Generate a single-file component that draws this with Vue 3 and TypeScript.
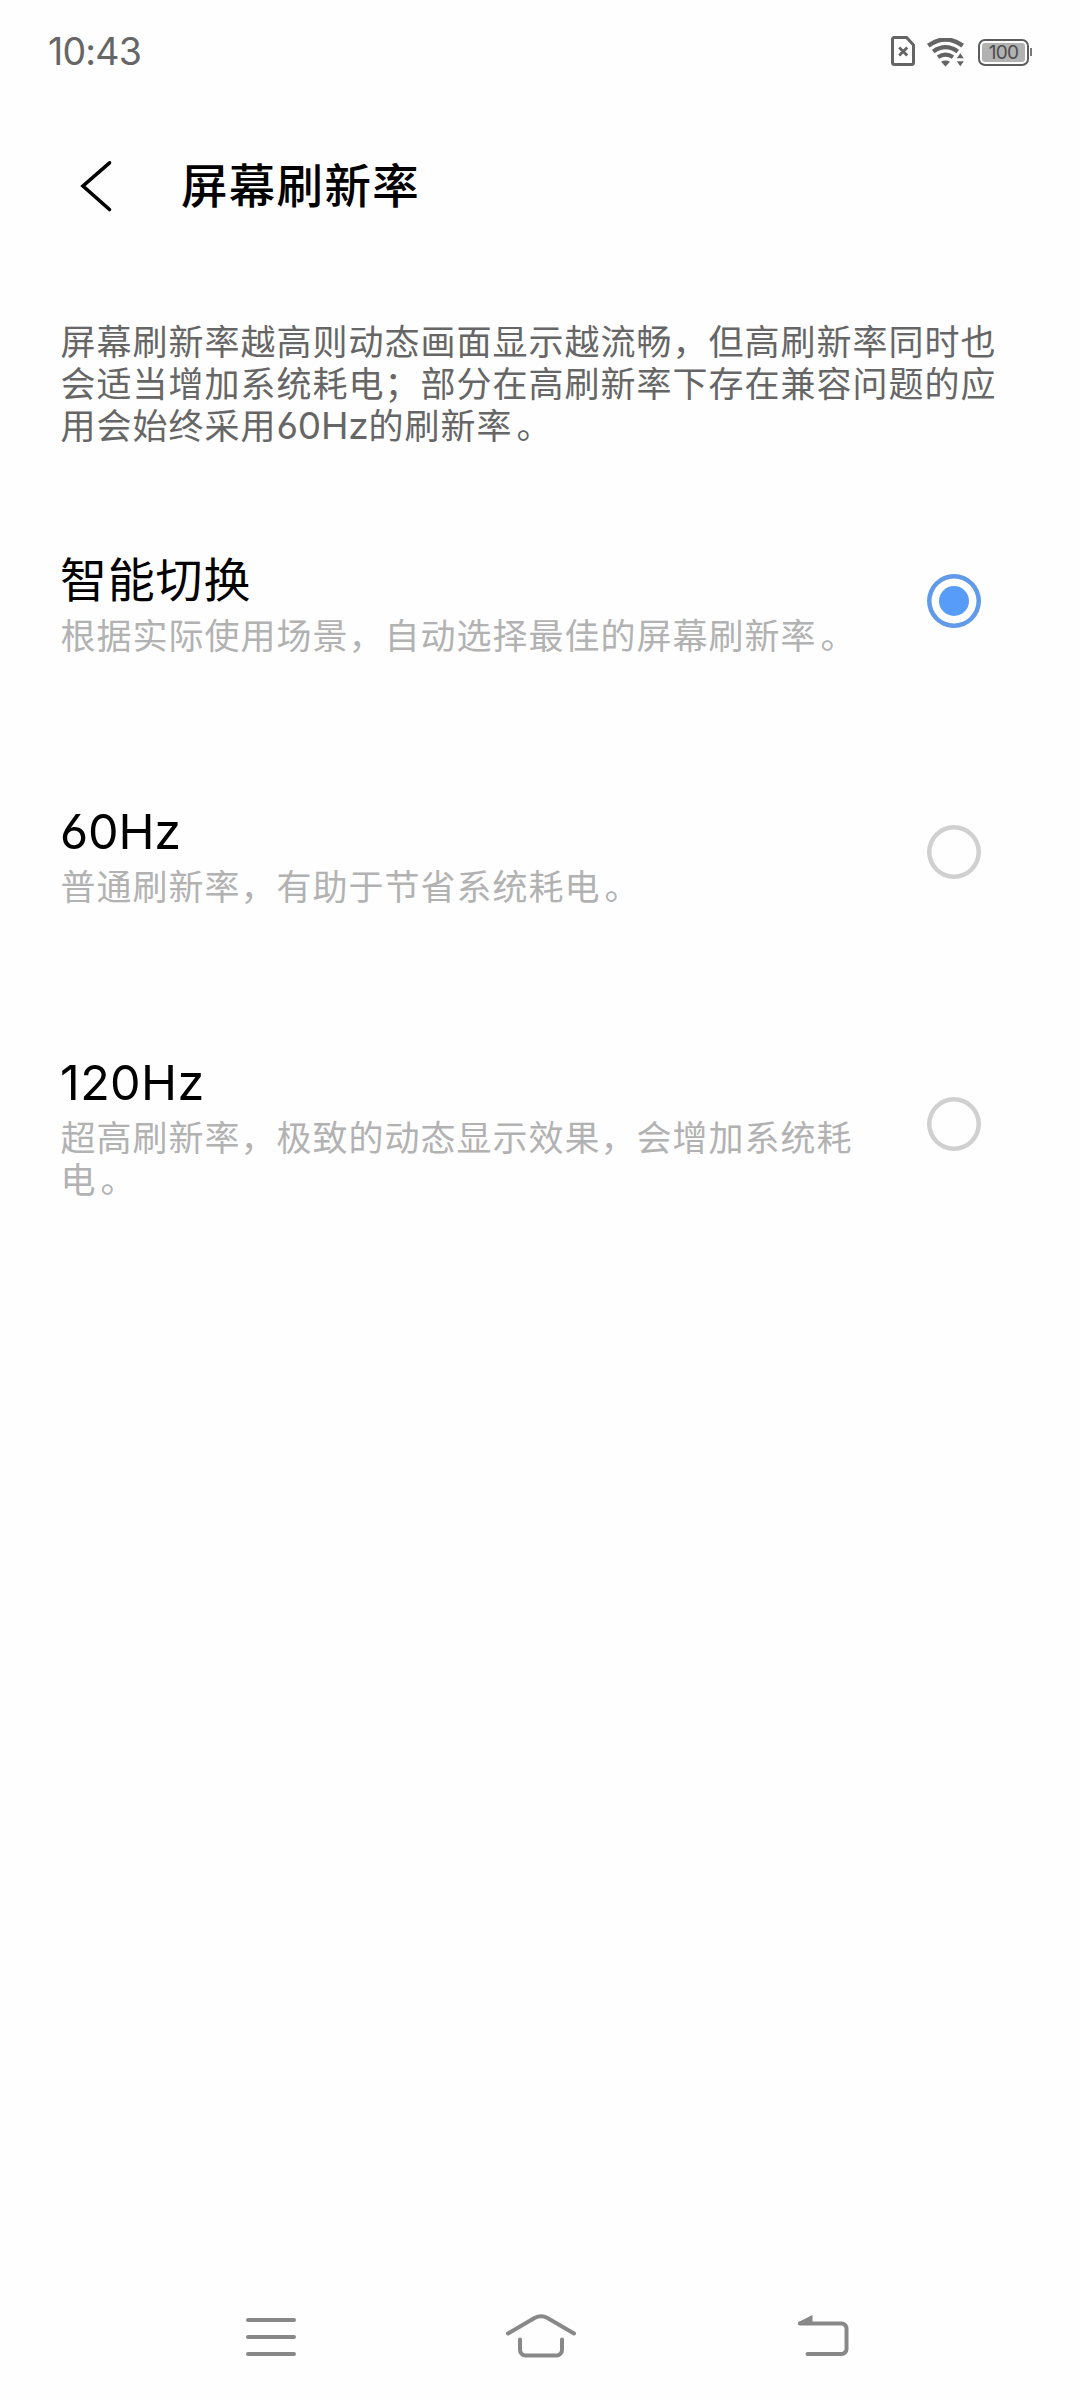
<script setup lang="ts">
import { ref } from 'vue'

interface RateOption {
  id: string
  title: string
  kind: string
  lines: string[]
}

const intro: string[] = [
  '屏幕刷新率越高则动态画面显示越流畅，但高刷新率同时也',
  '会适当增加系统耗电；部分在高刷新率下存在兼容问题的应',
]

const options: RateOption[] = [
  { id: 'auto', title: '智能切换', kind: 'cjk', lines: ['根据实际使用场景，自动选择最佳的屏幕刷新率'] },
  { id: '60', title: '60Hz', kind: 'latin', lines: ['普通刷新率，有助于节省系统耗电'] },
  { id: '120', title: '120Hz', kind: 'latin wide', lines: ['超高刷新率，极致的动态显示效果，会增加系统耗', '电'] },
]

const selected = ref('auto')
</script>

<template>
  <div class="screen">
    <header class="status">
      <span class="time">10:43</span>
      <div class="status-icons">
        <svg class="sim" width="24" height="30" viewBox="0 0 24 30" fill="none" stroke="#646464">
          <path d="M3 1.5H15.6L22.5 9V26.5a2 2 0 0 1-2 2H3.5a2 2 0 0 1-2-2V3a1.5 1.5 0 0 1 1.5-1.5Z" stroke-width="3" />
          <path d="M8.2 11.5l8 8M16.2 11.5l-8 8" stroke-width="2.8" />
        </svg>
        <svg class="wifi" width="38" height="29" viewBox="0 0 38 29" fill="none" stroke="#646464">
          <path d="M1.3 7.6Q18.5 -4.6 35.7 7.6" stroke-width="4.4" />
          <path d="M6.2 13.4Q18.5 4.9 30.8 13.4" stroke-width="4.2" />
          <path d="M11 19.2Q18.5 14 26 19.2" stroke-width="4" />
          <path d="M14 23.7Q18.5 21.4 23 23.7L18.5 28.5Z" fill="#646464" stroke="none" />
          <path d="M29.8 20.3L33.3 15.3L36.8 20.3ZM29.8 23.3L33.3 28.3L36.8 23.3Z" fill="#646464" stroke="none" />
        </svg>
        <div class="battery">
          <div class="battery-body"><span class="battery-fill">100</span></div>
          <i class="battery-tip"></i>
        </div>
      </div>
    </header>

    <div class="titlebar">
      <svg width="34" height="54" viewBox="0 0 34 54" fill="none" stroke="#000" stroke-width="3.6" stroke-linecap="round">
        <path d="M30.5 3.8L4 27L30.5 50.5" stroke-linejoin="miter" />
      </svg>
      <h1>屏幕刷新率</h1>
    </div>

    <p class="intro">
      <span v-for="line in intro" :key="line" class="line">{{ line }}</span>
      <span class="line">用会始终采用<span class="hz">60Hz</span>的刷新率<span class="stop">。</span></span>
    </p>

    <main class="options">
      <div v-for="o in options" :key="o.id" class="option" @click="selected = o.id">
        <div class="text">
          <h2 :class="o.kind">{{ o.title }}</h2>
          <p class="desc">
            <span v-for="(line, i) in o.lines" :key="line" class="line">{{ line }}<span v-if="i === o.lines.length - 1" class="stop">。</span></span>
          </p>
        </div>
        <span class="radio" :class="{ on: selected === o.id }"></span>
      </div>
    </main>

    <nav class="nav">
      <svg class="recents" width="50" height="40" viewBox="0 0 50 40" stroke="#888" stroke-width="4" stroke-linecap="round">
        <path d="M2 3H48M2 20H48M2 37H48" />
      </svg>
      <svg class="home" width="70" height="44" viewBox="0 0 70 44" fill="none" stroke="#888" stroke-width="4" stroke-linecap="round">
        <path d="M2 19.5L28.5 4Q35 0.5 41.5 4L68 19.5" />
        <path d="M14 25.5V36a5.5 5.5 0 0 0 5.5 5.5H50.5A5.5 5.5 0 0 0 56 36V25.5" />
      </svg>
      <svg class="back" width="52" height="42" viewBox="0 0 52 42" fill="none" stroke="#888" stroke-width="4" stroke-linecap="round">
        <path d="M3 8.5H44.500a5 5 0 0 1 5 5V34a5 5 0 0 1-5 5H10.500" />
        <path d="M1.500 7L15.500 0V10H2.500Q0 9 1.500 7Z" fill="#888" stroke="none" />
      </svg>
    </nav>
  </div>
</template>

<style>
body {
  background: #fefefe;
}
</style>

<style scoped>
.screen {
  width: 1080px;
  height: 2400px;
  display: flex;
  flex-direction: column;
  background: #fefefe;
  font-family: Inter, "Noto Sans CJK SC", sans-serif;
  font-feature-settings: "cv03";
  color: #000;
  overflow: hidden;
}
.status {
  height: 104px;
  flex: none;
  box-sizing: border-box;
  padding: 0 48px;
  display: flex;
  align-items: center;
  justify-content: space-between;
}
.time {
  font-size: 37.5px;
  line-height: 44px;
  letter-spacing: -0.8px;
  color: #666;
}
.status-icons {
  display: flex;
  align-items: center;
}
.sim {
  margin-bottom: 2px;
}
.wifi {
  margin-left: 12px;
}
.battery {
  margin-left: 13px;
  display: flex;
  align-items: center;
}
.battery-body {
  width: 51px;
  height: 27px;
  box-sizing: border-box;
  border: 2px solid #5c5c5c;
  border-radius: 7px;
  padding: 2px;
  display: flex;
}
.battery-fill {
  flex: 1;
  background: #b2b2b2;
  border-radius: 3px;
  color: #4c4c4c;
  font-size: 19px;
  line-height: 19px;
  text-align: center;
  letter-spacing: -0.8px;
}
.battery-tip {
  width: 2px;
  height: 8px;
  margin-left: 1px;
  background: #777;
}
.titlebar {
  height: 164px;
  flex: none;
  box-sizing: border-box;
  padding-left: 79px;
  display: flex;
  align-items: center;
}
h1 {
  margin: 0 0 0 68px;
  font-size: 46.5px;
  line-height: 60px;
  font-weight: 500;
  letter-spacing: 1.3px;
}
.intro {
  margin: 53px 0 0 60.5px;
  font-size: 35px;
  line-height: 42px;
  letter-spacing: 1px;
  color: #666;
}
.line {
  display: block;
  white-space: nowrap;
}
.hz {
  font-size: 37px;
  letter-spacing: -0.2px;
}
.stop {
  padding-left: 4px;
}
.options {
  margin: 98.5px 99px 0 60px;
  display: flex;
  flex-direction: column;
  gap: 140px;
}
.option {
  display: flex;
  align-items: center;
  justify-content: space-between;
}
h2 {
  margin: 0;
  font-size: 47px;
  line-height: 69px;
  font-weight: 400;
  letter-spacing: 0.8px;
}
.cjk {
  margin-bottom: 2px;
  line-height: 67px;
}
.latin {
  font-size: 48.5px;
  letter-spacing: -0.2px;
}
.wide {
  letter-spacing: 0.4px;
}
.desc {
  margin: 0 0 0 0.5px;
  font-size: 35px;
  line-height: 42px;
  letter-spacing: 1px;
  color: #b2b2b2;
}
.radio {
  width: 54px;
  height: 54px;
  flex: none;
  box-shadow: inset 0 0 0 4.5px #d0d0d0;
  border-radius: 50%;
  display: flex;
  align-items: center;
  justify-content: center;
}
.radio.on {
  box-shadow: inset 0 0 0 4.5px #609ae8;
}
.radio.on::after {
  content: "";
  width: 30px;
  height: 30px;
  border-radius: 50%;
  background: #579cf8;
}
.nav {
  margin-top: auto;
  height: 128px;
  display: flex;
  align-items: center;
  padding-left: 246px;
}
.recents {
  margin-top: 2px;
}
.home {
  margin-left: 210px;
}
.back {
  margin-left: 221px;
}
</style>
